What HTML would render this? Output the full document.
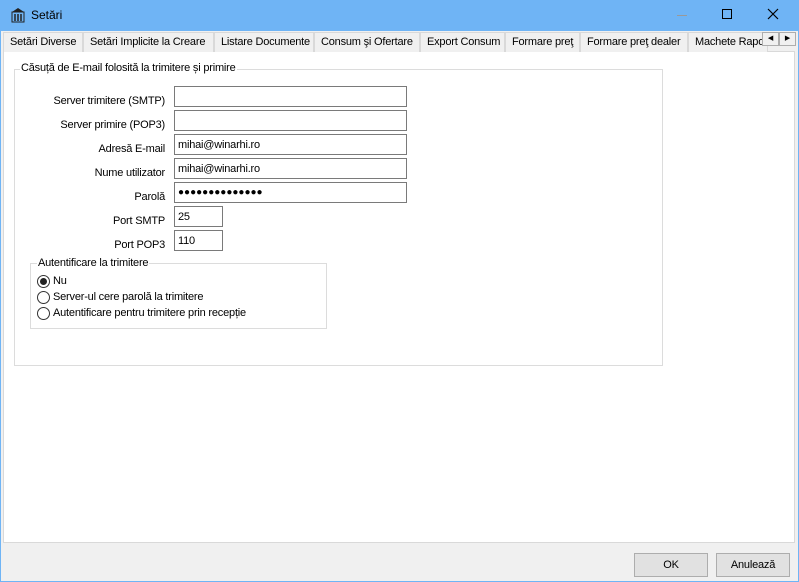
<!DOCTYPE html>
<html><head><meta charset="utf-8"><style>
*{box-sizing:border-box;margin:0;padding:0}
body{width:799px;height:582px;overflow:hidden;background:#6fb4f5;font-family:"Liberation Sans",sans-serif;font-size:11px;letter-spacing:-0.2px;color:#000;position:relative}
.abs{position:absolute}
.title{left:0;top:0;width:799px;height:31px;background:#6fb4f5}
.win{left:1px;top:31px;width:797px;height:550px;background:#f0f0f0}
.tabs{left:3px;top:32px;width:777px;height:20px;}
.tab{position:absolute;top:0;height:20px;border:1px solid #d9d9d9;border-bottom:none;background:#f0f0f0;line-height:19px;padding-left:6px;white-space:nowrap;overflow:hidden}
.content{left:3px;top:51px;width:792px;height:492px;background:#fff;border:1px solid #d9d9d9}
.grp{border:1px solid #dcdcdc}
.legend{background:#fff;padding:0 1px;white-space:nowrap}
.lbl{text-align:right;width:160px;left:5px;white-space:nowrap}
.inp{left:174px;width:233px;height:21px;border:1px solid #7a7a7a;background:#fff;padding:3px 3px;line-height:14px}
.btn{height:24px;width:74px;border:1px solid #adadad;background:#e1e1e1;text-align:center;line-height:22px}
.radio{width:13px;height:13px;border:1px solid #333;border-radius:50%;background:#fff}
</style></head><body>
<div class="abs title"></div>
<svg class="abs" style="left:11px;top:7px" width="14" height="16" viewBox="0 0 14 16"><path d="M1 5 L7 1 L13 5 Z" fill="#222"/><rect x="1" y="5" width="12" height="10" fill="none" stroke="#222"/><path d="M4 7v7M7 7v7M10 7v7" stroke="#222" stroke-width="1.5"/></svg>
<div class="abs" style="left:31px;top:8px;font-size:12px;letter-spacing:0">Setări</div>
<div class="abs" style="left:677px;top:15px;width:10px;height:1px;background:#999"></div>
<div class="abs" style="left:722px;top:9px;width:10px;height:10px;border:1px solid #000"></div>
<svg class="abs" style="left:767px;top:8px" width="12" height="12"><path d="M1 1L11 11M11 1L1 11" stroke="#000" stroke-width="1.2"/></svg>
<div class="abs win"></div>
<div class="abs content"></div>
<div class="abs tabs">
<div class="tab" style="left:0;width:80px">Setări Diverse</div>
<div class="tab" style="left:80px;width:131px">Setări Implicite la Creare</div>
<div class="tab" style="left:211px;width:100px">Listare Documente</div>
<div class="tab" style="left:311px;width:106px">Consum şi Ofertare</div>
<div class="tab" style="left:417px;width:85px">Export Consum</div>
<div class="tab" style="left:502px;width:75px">Formare preţ</div>
<div class="tab" style="left:577px;width:108px">Formare preţ dealer</div>
<div class="tab" style="left:685px;width:80px">Machete Rapoarte</div>
</div>
<div class="abs" style="left:762px;top:32px;width:17px;height:14px;border:1px solid #adadad;background:#f0f0f0;font-size:7px;text-align:center;line-height:12px">◀</div>
<div class="abs" style="left:779px;top:32px;width:17px;height:14px;border:1px solid #adadad;background:#f0f0f0;font-size:7px;text-align:center;line-height:12px">▶</div>

<div class="abs grp" style="left:14px;top:69px;width:649px;height:297px"></div>
<div class="abs legend" style="left:20px;top:62px">Căsuță de E-mail folosită la trimitere și primire</div>

<div class="abs lbl" style="top:95px">Server trimitere (SMTP)</div>
<div class="abs lbl" style="top:119px">Server primire (POP3)</div>
<div class="abs lbl" style="top:143px">Adresă E-mail</div>
<div class="abs lbl" style="top:167px">Nume utilizator</div>
<div class="abs lbl" style="top:191px">Parolă</div>
<div class="abs lbl" style="top:215px">Port SMTP</div>
<div class="abs lbl" style="top:239px">Port POP3</div>
<div class="abs inp" style="top:86px"></div>
<div class="abs inp" style="top:110px"></div>
<div class="abs inp" style="top:134px">mihai@winarhi.ro</div>
<div class="abs inp" style="top:158px">mihai@winarhi.ro</div>
<div class="abs inp" style="top:182px;font-size:10px;letter-spacing:0px;line-height:13px">●●●●●●●●●●●●●●</div>
<div class="abs inp" style="top:206px;width:49px">25</div>
<div class="abs inp" style="top:230px;width:49px">110</div>

<div class="abs grp" style="left:30px;top:263px;width:297px;height:66px"></div>
<div class="abs legend" style="left:37px;top:257px">Autentificare la trimitere</div>
<div class="abs radio" style="left:37px;top:275px"><div style="width:7px;height:7px;border-radius:50%;background:#222;margin:2px"></div></div>
<div class="abs" style="left:53px;top:275px">Nu</div>
<div class="abs radio" style="left:37px;top:291px"></div>
<div class="abs" style="left:53px;top:291px">Server-ul cere parolă la trimitere</div>
<div class="abs radio" style="left:37px;top:307px"></div>
<div class="abs" style="left:53px;top:307px">Autentificare pentru trimitere prin recepție</div>

<div class="abs btn" style="left:634px;top:553px">OK</div>
<div class="abs btn" style="left:716px;top:553px">Anulează</div>
</body></html>
